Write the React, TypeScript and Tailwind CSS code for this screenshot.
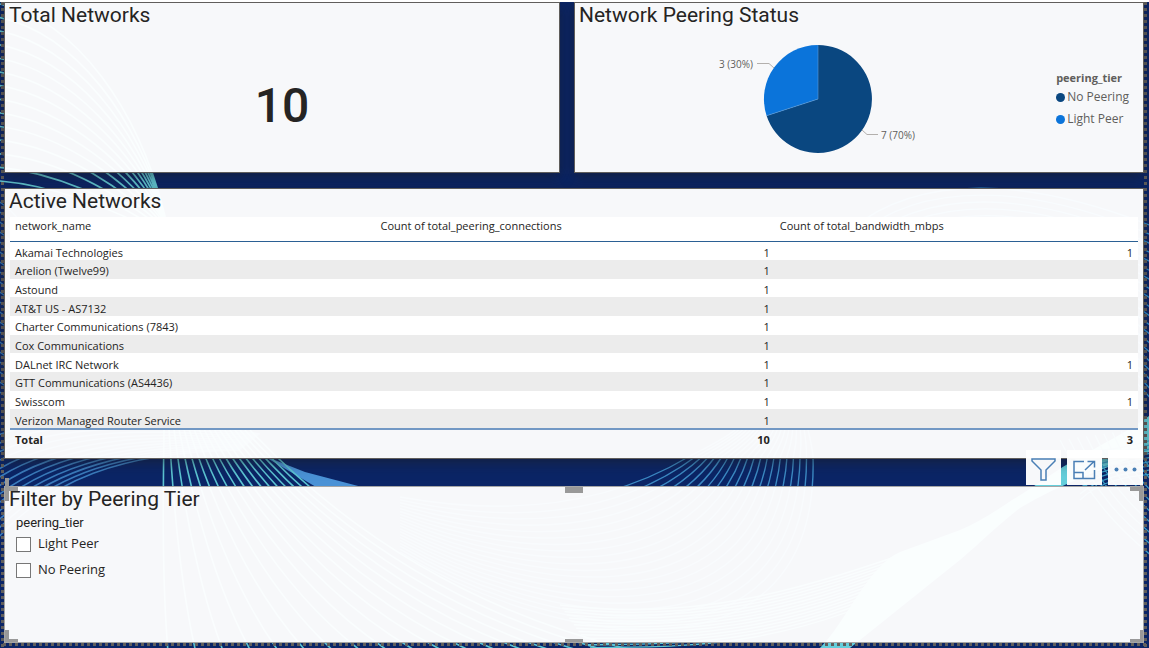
import type { ReactNode } from 'react';

type Row = { name: string; connections: number; bandwidth?: number };

const rows: Row[] = [
  { name: 'Akamai Technologies', connections: 1, bandwidth: 1 },
  { name: 'Arelion (Twelve99)', connections: 1 },
  { name: 'Astound', connections: 1 },
  { name: 'AT&T US - AS7132', connections: 1 },
  { name: 'Charter Communications (7843)', connections: 1 },
  { name: 'Cox Communications', connections: 1 },
  { name: 'DALnet IRC Network', connections: 1, bandwidth: 1 },
  { name: 'GTT Communications (AS4436)', connections: 1 },
  { name: 'Swisscom', connections: 1, bandwidth: 1 },
  { name: 'Verizon Managed Router Service', connections: 1 },
];

// Blends two cubic curves (x,y pairs) into a family of evenly spaced lines.
function family(a: number[], b: number[], count: number): string {
  const lines: string[] = [];
  for (let i = 0; i < count; i++) {
    const t = i / (count - 1);
    const p = a.map((v, k) => (v + (b[k] - v) * t).toFixed(1));
    lines.push(`M${p[0]} ${p[1]}C${p.slice(2).join(' ')}`);
  }
  return lines.join('');
}

function Waves() {
  return (
    <svg
      className="absolute inset-0 h-full w-full"
      viewBox="0 2 1149 646"
      preserveAspectRatio="none"
      fill="none"
      aria-hidden="true"
    >
      <rect width="1149" height="648" fill="#0b2566" />
      <path
        stroke="#62c8d4"
        strokeWidth="1.7"
        d={family([0, 4, 78, 22, 138, 110, 164, 212], [0, 181, 60, 186, 120, 212, 172, 240], 14)}
      />
      <path
        stroke="#2f78b8"
        strokeWidth="1.4"
        d={family([-4, 200, 8, 206, 16, 216, 24, 226], [-4, 390, 8, 396, 16, 406, 24, 416], 20)}
      />
      <path
        stroke="#3a7cbd"
        strokeWidth="1.6"
        d={family([-4, 436, 60, 410, 170, 420, 260, 434], [-4, 540, 50, 480, 120, 452, 240, 450], 13)}
      />
      <path fill="#4a92d6" d="M262 455L305 472L362 487H316Z" />
      <path
        stroke="#5cc4d2"
        strokeWidth="1.6"
        d={family([164, 430, 163, 500, 162, 580, 168, 652], [250, 430, 335, 520, 460, 610, 640, 652], 18)}
      />
      <path
        stroke="#3c8ac4"
        strokeWidth="1.4"
        d={
          family([400, 497, 500, 515, 600, 510, 690, 456], [400, 552, 560, 650, 820, 690, 813, 456], 20) +
          family([690, 456, 710, 446, 725, 438, 735, 430], [813, 456, 812, 446, 810, 438, 808, 430], 20)
        }
      />
      <path
        stroke="#5cc4d2"
        strokeWidth="1.4"
        d={family([560, 605, 700, 622, 800, 590, 930, 545], [590, 648, 660, 645, 780, 656, 930, 575], 14)}
      />
      <path
        fill="#64cedb"
        d="M820 648C846 622 868 566 900 552L960 530Q980 522 1012 500C1036 486 1056 470 1078 458C1110 440 1130 430 1149 416V452C1110 466 1060 484 1020 508C990 532 975 548 960 560C925 588 890 616 850 648Z"
      />
      <path
        stroke="#3a9cc4"
        strokeWidth="1.3"
        d={
          family([1060, 440, 1090, 500, 1120, 530, 1152, 556], [1130, 430, 1138, 450, 1145, 462, 1152, 470], 9) +
          family([1080, 452, 1100, 450, 1120, 450, 1152, 440], [1080, 500, 1100, 480, 1130, 476, 1152, 474], 9)
        }
      />
      <path
        stroke="#2f8fd0"
        strokeWidth="1.3"
        d={family([850, 230, 920, 172, 1030, 178, 1152, 226], [910, 380, 960, 300, 1060, 290, 1152, 400], 20)}
      />
    </svg>
  );
}

function Card({ title, className, children }: { title: string; className: string; children: ReactNode }) {
  return (
    <section className={`relative flex flex-col border bg-white/97 ${className}`}>
      <h2 className="pl-1 font-['Roboto','Liberation_Sans',sans-serif] text-[21px] leading-6 text-[#252423]">
        {title}
      </h2>
      {children}
    </section>
  );
}

function PieChart() {
  return (
    <svg width="220" height="116" viewBox="0 0 220 116" role="img" aria-label="Networks by peering tier">
      <path d="M110 58V4A54 54 0 1 1 58.6 74.7Z" fill="#0a4780" />
      <path d="M110 58L58.6 74.7A54 54 0 0 1 110 4Z" fill="#0b74da" />
      <path d="M110 4V58L58.6 74.7" fill="none" stroke="#5a9ad6" strokeWidth="0.6" />
      <path d="M49 22.5H61L66 27M154 89L159 93.5H170" fill="none" stroke="#b3b0ad" />
      <g className="fill-[#605e5c] font-['Open_Sans','Noto_Sans',sans-serif] text-[10px]">
        <text x="11" y="27">3 (30%)</text>
        <text x="173" y="98">7 (70%)</text>
      </g>
    </svg>
  );
}

function LegendItem({ dot, label }: { dot: string; label: string }) {
  return (
    <li className="flex items-center gap-[2px]">
      <span className={`size-[9px] rounded-full ${dot}`} />
      {label}
    </li>
  );
}

const handle = 'pointer-events-none absolute border-[#999] ';

function SelectionHandles() {
  return (
    <>
      <span className={`${handle}top-0 left-0 h-[14px] w-[13px] border-t-4 border-l-4`} />
      <span className={`${handle}top-0 right-0 h-[14px] w-[13px] border-t-4 border-r-4`} />
      <span className={`${handle}bottom-0 left-0 h-[12px] w-[13px] border-b-3 border-l-4`} />
      <span className={`${handle}right-0 bottom-0 h-[12px] w-[13px] border-r-3 border-b-3`} />
      <span className={`${handle}-top-[2px] left-1/2 w-[18px] -translate-x-1/2 border-t-6`} />
      <span className={`${handle}bottom-0 left-1/2 w-[18px] -translate-x-1/2 border-t-3`} />
      <span className={`${handle}top-1/2 left-0 h-[18px] -translate-y-1/2 border-l-4`} />
      <span className={`${handle}top-1/2 right-0 h-[18px] -translate-y-1/2 border-l-3`} />
    </>
  );
}

function ToolButton({ label, children }: { label: string; children: ReactNode }) {
  return (
    <button type="button" aria-label={label} className="grid size-[35px] place-items-center bg-white/97 pt-1 text-[#4a7fb5]">
      {children}
    </button>
  );
}

function Option({ id, label }: { id: string; label: string }) {
  return (
    <li className="flex h-[26px] items-center gap-[7px]">
      <input id={id} type="checkbox" className="size-[15px] appearance-none border border-[#777] bg-white checked:bg-[#444]" />
      <label htmlFor={id} className="text-[13px]">
        {label}
      </label>
    </li>
  );
}

export default function App() {
  return (
    <div className="flex min-h-screen flex-col bg-white pt-[2px] font-['Open_Sans','Noto_Sans',sans-serif] text-[#252423]">
      <main className="relative flex flex-1 flex-col overflow-hidden pr-[5px] pb-[5px] pl-1">
        <Waves />
        <div className="pointer-events-none absolute inset-y-0 left-px w-[3px] bg-[repeating-linear-gradient(to_bottom,#605e5c_0_3px,transparent_3px_6px)]" />
        <div className="pointer-events-none absolute inset-y-0 right-[2px] w-[3px] bg-[repeating-linear-gradient(to_bottom,#605e5c_0_3px,transparent_3px_6px)]" />
        <div className="pointer-events-none absolute inset-x-0 bottom-[2px] h-[3px] bg-[repeating-linear-gradient(to_right,transparent_0_3px,#605e5c_3px_6px)]" />

        <div className="relative grid grid-cols-[556fr_570fr] gap-[14px]">
          <Card title="Total Networks" className="h-[171px] border-[#605e5c] shadow-[0_4px_12px_rgba(30,30,30,0.5)]">
            <p className="mt-[52px] text-center font-['Roboto','Liberation_Sans',sans-serif] text-[48px] leading-[54px] font-medium">
              10
            </p>
          </Card>
          <Card
            title="Network Peering Status"
            className="h-[171px] border-[#605e5c] shadow-[0_4px_12px_rgba(30,30,30,0.5)]"
          >
            <div className="flex flex-1 pr-[14px] text-[#605e5c]">
              <div className="flex flex-1 justify-center pt-[14px] pl-1">
                <PieChart />
              </div>
              <div className="pt-[43px]">
                <h3 className="text-[11px] leading-4 font-bold">peering_tier</h3>
                <ul className="text-[12px] leading-[22px]">
                  <LegendItem dot="bg-[#0a4780]" label="No Peering" />
                  <LegendItem dot="bg-[#0b74da]" label="Light Peer" />
                </ul>
              </div>
            </div>
          </Card>
        </div>

        <Card
          title="Active Networks"
          className="mt-[15px] h-[271px] border-[#605e5c] shadow-[0_4px_12px_rgba(30,30,30,0.5)]"
        >
          <div className="mt-1 pr-[5px] pl-[5px]">
            <table className="h-[231px] w-full table-fixed border-collapse text-[11px] leading-[15px]">
              <colgroup>
                <col className="w-[32.4%]" />
                <col className="w-[35.4%]" />
                <col className="w-[32.2%]" />
              </colgroup>
              <thead className="bg-white">
                <tr className="h-[24px] border-b border-[#2b6094] text-left align-top">
                  <th className="px-[5px] pt-px font-normal">network_name</th>
                  <th className="px-[5px] pt-px font-normal">Count of total_peering_connections</th>
                  <th className="px-[5px] pt-px font-normal">Count of total_bandwidth_mbps</th>
                </tr>
              </thead>
              <tbody>
                {rows.map((row) => (
                  <tr key={row.name} className="bg-white even:bg-[#ececec]">
                    <td className="px-[5px] pt-[3px]">{row.name}</td>
                    <td className="px-[5px] pt-[3px] text-right">{row.connections}</td>
                    <td className="px-[5px] pt-[3px] text-right">{row.bandwidth}</td>
                  </tr>
                ))}
              </tbody>
              <tfoot>
                <tr className="h-[19px] border-t-2 border-[#7298c4] font-bold">
                  <td className="px-[5px]">Total</td>
                  <td className="px-[5px] text-right">10</td>
                  <td className="px-[5px] text-right">3</td>
                </tr>
              </tfoot>
            </table>
          </div>
        </Card>

        <Card title="Filter by Peering Tier" className="mt-[27px] min-h-[157px] flex-1 border-[#a6a6a6]">
          <SelectionHandles />
          <fieldset className="pl-[11px]">
            <legend className="pt-1 font-['Roboto','Liberation_Sans',sans-serif] text-[13px] leading-4">
              peering_tier
            </legend>
            <ul>
              <Option id="tier-light" label="Light Peer" />
              <Option id="tier-none" label="No Peering" />
            </ul>
          </fieldset>
          <div className="absolute -top-[37px] right-0 flex gap-[6px]">
            <ToolButton label="Filters">
              <svg width="25" height="23" viewBox="0 0 25 23" fill="none" stroke="currentColor" strokeWidth="1.5">
                <path d="M1 1H24V3L15 12V22H10V12L1 3Z" />
              </svg>
            </ToolButton>
            <ToolButton label="Focus mode">
              <svg width="23" height="20" viewBox="0 0 23 20" fill="none" stroke="currentColor" strokeWidth="1.5">
                <path d="M11 1.5H1V18.5H21.5V10M1 12.5H10V18.5M12 10L21 1.5M14.5 1.5H21.5V7.5" />
              </svg>
            </ToolButton>
            <ToolButton label="More options">
              <svg width="23" height="5" viewBox="0 0 23 5" fill="currentColor">
                <circle cx="2.5" cy="2.5" r="2" />
                <circle cx="11.5" cy="2.5" r="2" />
                <circle cx="20.5" cy="2.5" r="2" />
              </svg>
            </ToolButton>
          </div>
        </Card>
      </main>
    </div>
  );
}
